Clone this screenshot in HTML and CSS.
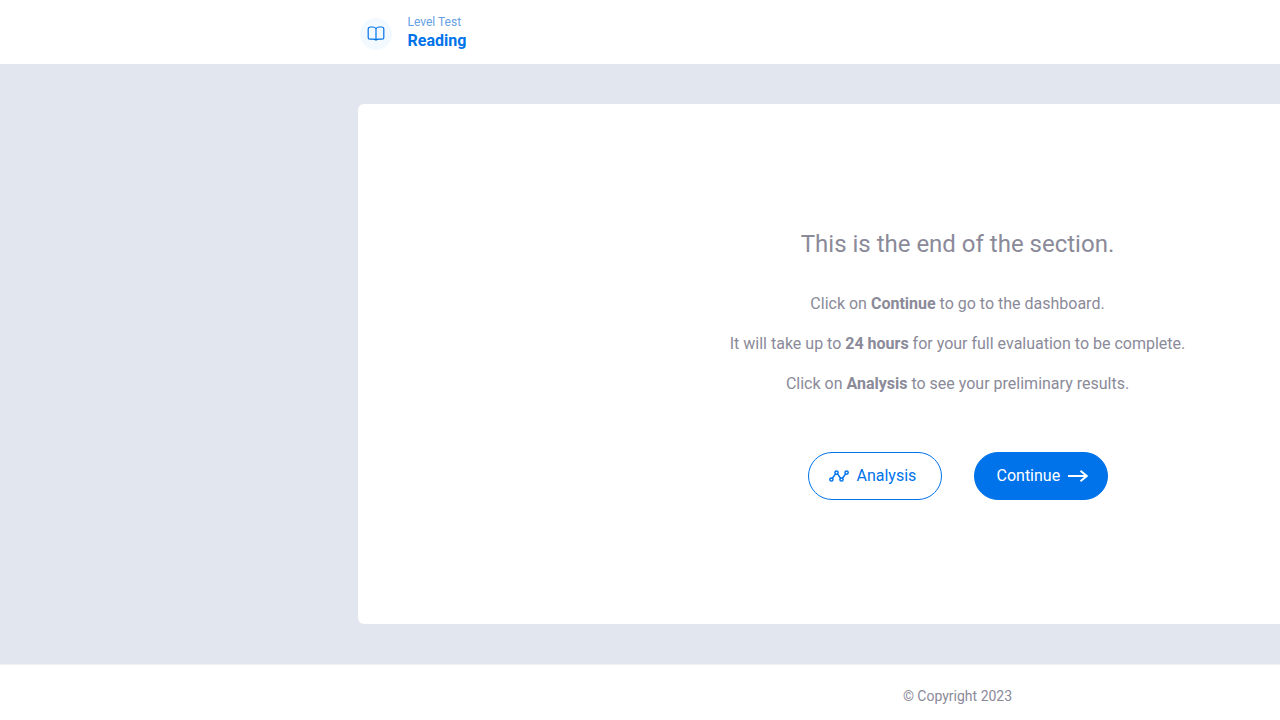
FILE: index.html
```html
<!DOCTYPE html>
<html lang="en">
<head>
<meta charset="utf-8">
<meta name="viewport" content="width=device-width, initial-scale=1">
<title>Level Test - Reading</title>
<link rel="stylesheet" href="styles.css">
</head>
<body>
<div class="page">
  <header class="header">
    <div class="container header-inner">
      <span class="badge">
        <svg width="18" height="18" viewBox="0 0 18 18" fill="none" stroke="currentColor" stroke-width="1.2" stroke-linecap="round" stroke-linejoin="round" aria-hidden="true">
          <path d="M9 3.7C8.3 2.5 7.200 2 5.700 2H3.500C2.500 2 1.200 2.400 1.200 3.900V12.700C1.200 14 2 14.200 3 14.200H5.700C7.200 14.200 8.500 14.300 9 15.200C9.500 14.300 10.800 14.200 12.300 14.200H15C16 14.200 16.800 14 16.800 12.700V3.900C16.800 2.400 15.500 2 14.500 2H12.300C10.800 2 9.700 2.500 9 3.700ZM9 3.700V15"/>
        </svg>
      </span>
      <div class="titles">
        <span class="eyebrow">Level Test</span>
        <h1 class="title">Reading</h1>
      </div>
    </div>
  </header>
  <main class="main">
    <section class="container card">
      <h2 class="heading">This is the end of the section.</h2>
      <div class="message">
        <p>Click on <strong>Continue</strong> to go to the dashboard.</p>
        <p>It will take up to <strong>24 hours</strong> for your full evaluation to be complete.</p>
        <p>Click on <strong>Analysis</strong> to see your preliminary results.</p>
      </div>
      <div class="actions">
        <button class="button outline" type="button">
          <svg width="20" height="12" viewBox="0 0 20 12" fill="none" stroke="currentColor" stroke-width="1.5" aria-hidden="true">
            <circle cx="2.400" cy="9.500" r="1.600"/><circle cx="7.500" cy="2.600" r="1.600"/><circle cx="12.500" cy="9.500" r="1.600"/><circle cx="17.600" cy="2.600" r="1.600"/>
            <path d="M3.400 8.200L6.500 3.900M8.500 3.900L11.500 8.200M13.500 8.200L16.600 3.900"/>
          </svg>
          <span>Analysis</span>
        </button>
        <button class="button solid" type="button">
          <span>Continue</span>
          <svg width="20" height="12" viewBox="0 0 20 12" fill="none" stroke="currentColor" stroke-width="1.900" aria-hidden="true">
            <path d="M0 6H18.500M12.500 0.800L18.700 6L12.500 11.200"/>
          </svg>
        </button>
      </div>
    </section>
  </main>
  <footer class="footer">© Copyright 2023</footer>
</div>
</body>
</html>
```
FILE: styles.css
```css
* {
  box-sizing: border-box;
}

html {
  overflow: hidden;
}

body {
  margin: 0;
  font-family: Roboto, "Liberation Sans", sans-serif;
  font-size: 16px;
  line-height: 24px;
  color: #8a8a99;
  background: #fff;
}

h1, h2, p {
  margin: 0;
}

.page {
  display: flex;
  flex-direction: column;
  min-width: 1915px;
  min-height: 100vh;
}

.container {
  width: 100%;
  max-width: 1200px;
  margin: 0 auto;
}

.header {
  display: flex;
  min-height: 64px;
  background: #fff;
}

.header-inner {
  display: flex;
  align-items: center;
  gap: 16px;
  padding: 0 2px;
}

.badge {
  display: flex;
  align-items: center;
  justify-content: center;
  width: 32px;
  height: 32px;
  margin-top: 4px;
  border-radius: 50%;
  background: #f2f9ff;
  color: #0073ea;
}

.titles {
  display: flex;
  flex-direction: column;
  padding-top: 2px;
}

.eyebrow {
  font-size: 12px;
  line-height: 16px;
  color: #669fe5;
}

.title {
  font-size: 16px;
  line-height: 22px;
  font-weight: 700;
  color: #0073ea;
}

.main {
  flex: 1;
  display: flex;
  padding: 40px 0;
  background: #e1e6ef;
}

.card {
  display: flex;
  flex-direction: column;
  align-items: center;
  justify-content: center;
  border-radius: 6px;
  background: #fff;
  text-align: center;
}

.heading {
  font-size: 24px;
  line-height: 32px;
  font-weight: 400;
}

.message {
  display: flex;
  flex-direction: column;
  gap: 16px;
  margin: 32px 0 56px;
}

.actions {
  display: flex;
  gap: 32px;
}

.button {
  display: flex;
  align-items: center;
  gap: 8px;
  min-width: 134px;
  height: 48px;
  border: 1px solid #0073ea;
  border-radius: 24px;
  font: inherit;
  cursor: pointer;
}

.outline {
  padding: 0 20px;
  background: #fff;
  color: #0073ea;
}

.solid {
  padding: 0 16px 0 22px;
  background: #0073ea;
  color: #fff;
}

.footer {
  padding: 19px 0 12px;
  border-top: 1px solid #eff1f5;
  background: #fff;
  font-size: 14px;
  text-align: center;
}
```
